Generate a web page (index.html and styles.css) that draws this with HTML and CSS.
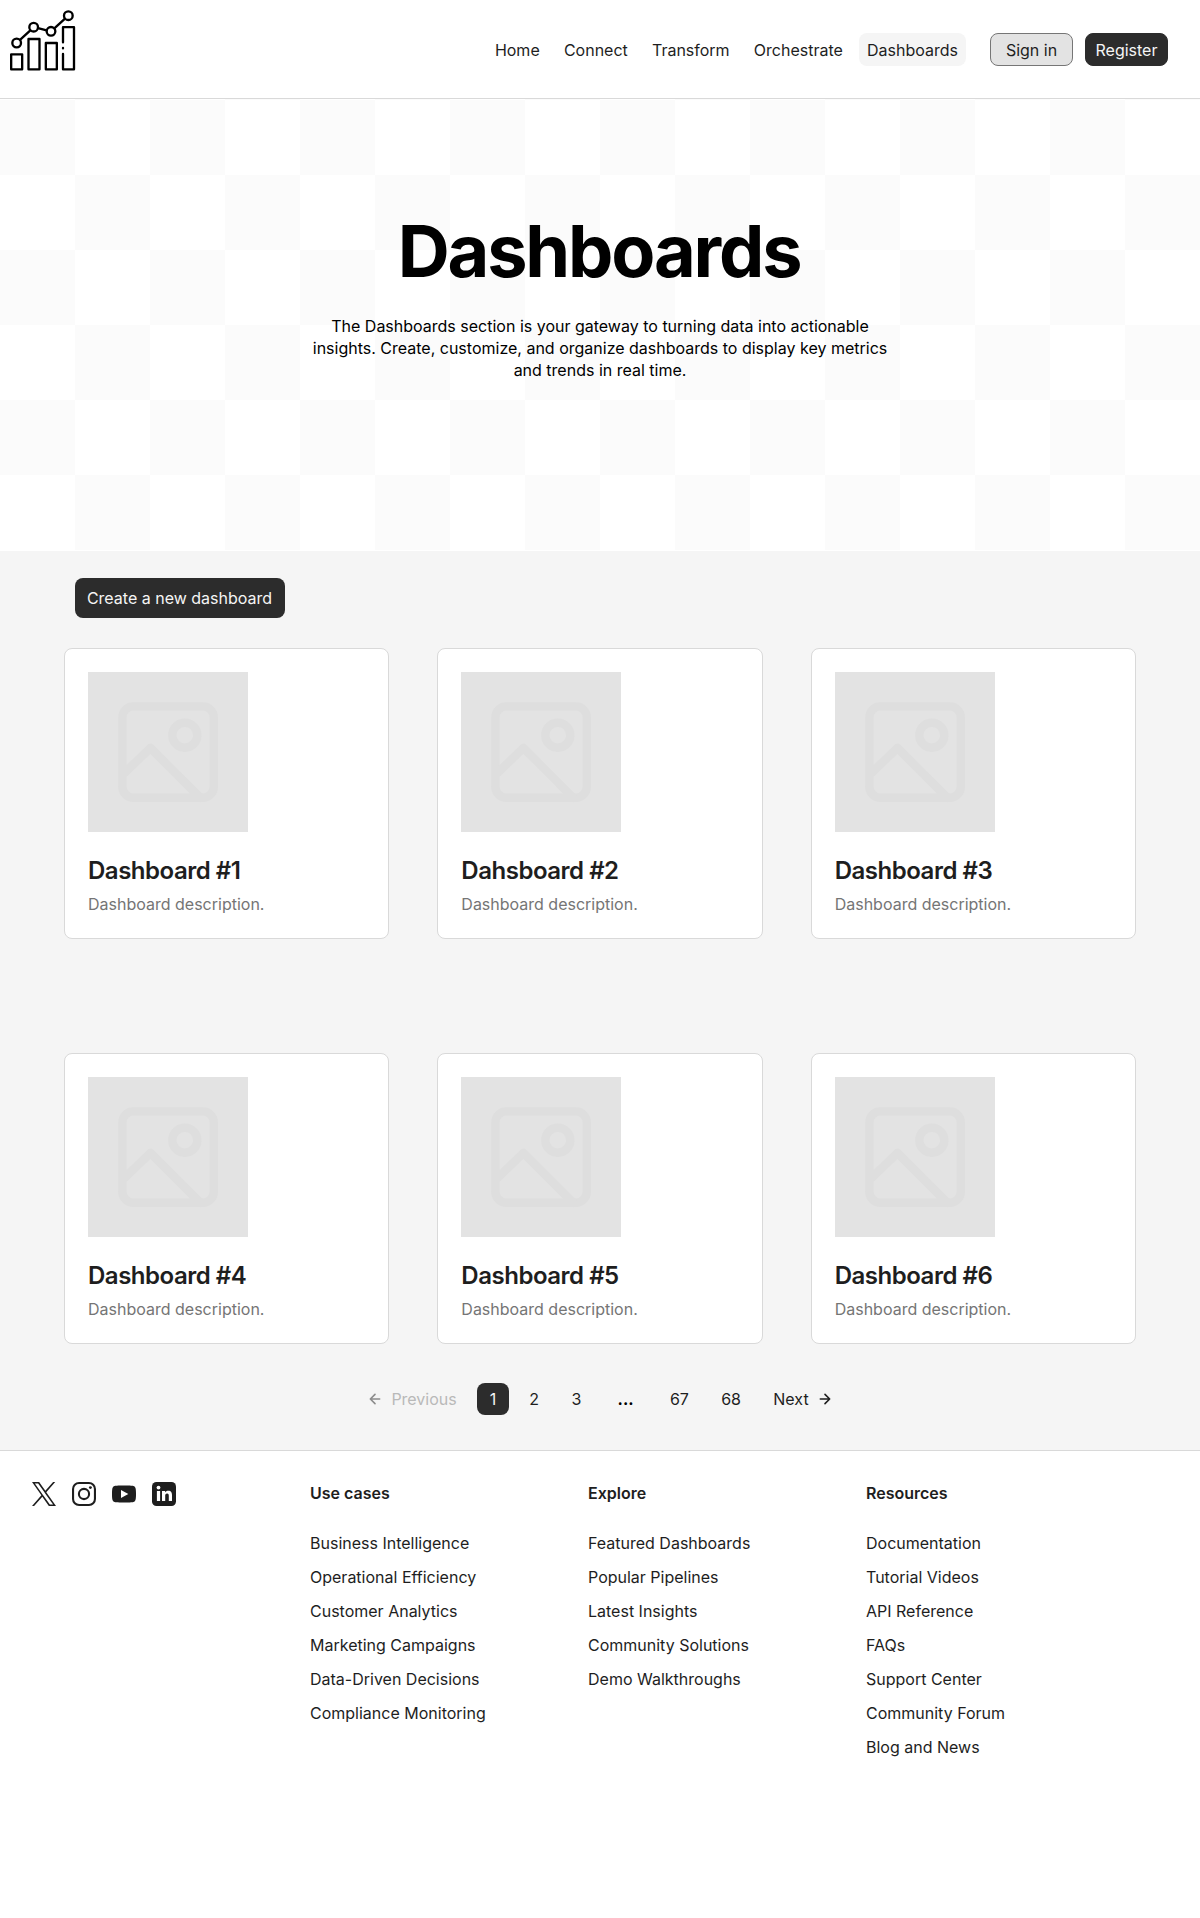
FILE: index.html
```html
<!DOCTYPE html>
<html lang="en">
<head>
<meta charset="utf-8">
<title>Dashboards</title>
<link rel="stylesheet" href="styles.css">
</head>
<body>
<svg class="sprite" width="0" height="0" aria-hidden="true">
  <symbol id="placeholder" viewBox="0 0 160 160">
    <g fill="none" stroke="#dedede" stroke-width="8.4" stroke-linecap="round" stroke-linejoin="round">
      <rect x="34.4" y="34.4" width="91.4" height="91.4" rx="11"/>
      <circle cx="96.8" cy="63.2" r="12.5"/>
      <path d="M36 101.500 62.400 76l50 50"/>
    </g>
  </symbol>
</svg>

<header class="header">
  <a class="logo" href="#" aria-label="Home">
    <svg viewBox="0 0 240 225" width="80" height="75" fill="none" stroke="#000" stroke-width="7" stroke-linejoin="round" stroke-linecap="round">
      <path d="M33.500 163h33v45h-33zM85.500 117h33v91h-33zM137.500 129h33v79h-33zM189 127V81.500h33V208h-33v-46M189 144v1"/>
      <circle cx="50" cy="129" r="13"/><circle cx="101" cy="81.500" r="13"/><circle cx="153" cy="94" r="13"/><circle cx="205" cy="47" r="13"/>
      <path d="M60 119.500 91 91M114 84.500l26 6.500M163 85l32-29"/>
    </svg>
  </a>
  <nav class="nav">
    <a href="#">Home</a>
    <a href="#">Connect</a>
    <a href="#">Transform</a>
    <a href="#">Orchestrate</a>
    <a href="#" class="active">Dashboards</a>
  </nav>
  <div class="auth">
    <button class="btn btn-neutral">Sign in</button>
    <button class="btn btn-dark">Register</button>
  </div>
</header>

<section class="hero">
  <h1>Dashboards</h1>
  <p>The Dashboards section is your gateway to turning data into actionable insights. Create, customize, and organize dashboards to display key metrics and trends in real time.</p>
</section>

<main class="main">
  <button class="create">Create a new dashboard</button>
  <div class="grid">
    <article class="card"><svg class="thumb"><use href="#placeholder"/></svg><h2>Dashboard #1</h2><p>Dashboard description.</p></article>
    <article class="card"><svg class="thumb"><use href="#placeholder"/></svg><h2>Dahsboard #2</h2><p>Dashboard description.</p></article>
    <article class="card"><svg class="thumb"><use href="#placeholder"/></svg><h2>Dashboard #3</h2><p>Dashboard description.</p></article>
    <article class="card"><svg class="thumb"><use href="#placeholder"/></svg><h2>Dashboard #4</h2><p>Dashboard description.</p></article>
    <article class="card"><svg class="thumb"><use href="#placeholder"/></svg><h2>Dashboard #5</h2><p>Dashboard description.</p></article>
    <article class="card"><svg class="thumb"><use href="#placeholder"/></svg><h2>Dashboard #6</h2><p>Dashboard description.</p></article>
  </div>
  <nav class="pages">
    <a class="page prev"><svg width="16" height="16" viewBox="0 0 16 16" fill="none" stroke="#8c8c8c" stroke-width="1.600" stroke-linecap="round" stroke-linejoin="round"><path d="M12.670 8H3.330M8 12.670 3.330 8 8 3.330"/></svg>Previous</a>
    <a class="page current">1</a>
    <a class="page">2</a>
    <a class="page">3</a>
    <span class="dots">...</span>
    <a class="page">67</a>
    <a class="page">68</a>
    <a class="page">Next<svg width="16" height="16" viewBox="0 0 16 16" fill="none" stroke="#1e1e1e" stroke-width="1.600" stroke-linecap="round" stroke-linejoin="round"><path d="M3.330 8h9.340M8 3.330 12.670 8 8 12.670"/></svg></a>
  </nav>
</main>

<footer class="footer">
  <div class="social">
    <svg width="24" height="24" viewBox="0 0 24 24" fill="#1e1e1e"><path d="M14.283 10.162 23.218 0H21.100l-7.757 8.824L7.147 0H0l9.370 13.343L0 24h2.117l8.193-9.318L16.853 24H24l-9.717-13.838ZM11.383 13.461l-.949-1.329L2.880 1.560h3.252l6.096 8.533.950 1.329 7.924 11.090H17.850l-6.467-9.051Z"/></svg>
    <svg width="24" height="24" viewBox="0 0 24 24" fill="none" stroke="#1e1e1e" stroke-width="2.100"><rect x="1.050" y="1.050" width="21.900" height="21.900" rx="6"/><circle cx="12" cy="12" r="5.100"/><circle cx="18.400" cy="5.600" r="1.440" fill="#1e1e1e" stroke="none"/></svg>
    <svg width="24" height="24" viewBox="0 0 24 24"><path fill="#1e1e1e" d="M23.760 7.200s-.230-1.660-.960-2.390c-.910-.950-1.930-.960-2.400-1.020C17.050 3.550 12 3.550 12 3.550s-5.050 0-8.400.240c-.470.060-1.490.060-2.400 1.020C.470 5.540.240 7.200.240 7.200S0 9.140 0 11.090v1.820c0 1.940.240 3.890.240 3.890s.230 1.660.960 2.390c.910.950 2.110.920 2.640 1.030 1.920.180 8.160.240 8.160.240s5.050-.010 8.400-.250c.470-.060 1.490-.060 2.400-1.020.730-.730.960-2.390.960-2.390s.240-1.940.240-3.890v-1.820c0-1.950-.240-3.890-.240-3.890Z"/><path fill="#fff" d="M9 7.900v8l7.300-4z"/></svg>
    <svg width="24" height="24" viewBox="0 0 24 24"><rect width="24" height="24" rx="4.500" fill="#1e1e1e"/><g fill="#fff"><circle cx="6.500" cy="5.600" r="1.900"/><rect x="4.900" y="9" width="3.200" height="10"/><path d="M10 9h3.100v1.400c.600-1 1.700-1.700 3.200-1.700 2.900 0 3.700 1.900 3.700 4.500V19h-3.200v-5.100c0-1.300-.200-2.500-1.700-2.500s-1.900 1.200-1.900 2.500V19H10z"/></g></svg>
  </div>
  <div class="col">
    <h3>Use cases</h3>
    <a>Business Intelligence</a><a>Operational Efficiency</a><a>Customer Analytics</a><a>Marketing Campaigns</a><a>Data-Driven Decisions</a><a>Compliance Monitoring</a>
  </div>
  <div class="col">
    <h3>Explore</h3>
    <a>Featured Dashboards</a><a>Popular Pipelines</a><a>Latest Insights</a><a>Community Solutions</a><a>Demo Walkthroughs</a>
  </div>
  <div class="col">
    <h3>Resources</h3>
    <a>Documentation</a><a>Tutorial Videos</a><a>API Reference</a><a>FAQs</a><a>Support Center</a><a>Community Forum</a><a>Blog and News</a>
  </div>
</footer>
</body>
</html>
```
FILE: styles.css
```css
* { box-sizing: border-box; }
body {
  margin: 0;
  min-height: 1918px;
  background: #fff;
  color: #1e1e1e;
  font: 400 16px/22px Inter, sans-serif;
}
h1, h2, h3, p { margin: 0; }
a { color: inherit; text-decoration: none; }
button { font: inherit; margin: 0; cursor: pointer; }
svg { display: block; flex: none; }
.sprite { position: absolute; }

.header {
  display: flex;
  align-items: center;
  height: 99px;
  padding-right: 32px;
  border-bottom: 1px solid #d9d9d9;
}
.logo { align-self: flex-start; margin-right: auto; }
.nav { display: flex; gap: 8.2px; margin-right: 24px; }
.nav a { height: 33px; padding: 1px 8px 0; line-height: 33px; border-radius: 8px; }
.nav .active { background: #f5f5f5; }
.auth { display: flex; gap: 12px; }
.btn {
  width: 83px;
  height: 33px;
  padding: 1px 0 0;
  border: 1px solid #2c2c2c;
  border-radius: 8px;
  line-height: 30px;
  text-align: center;
}
.btn-neutral { background: #e3e3e3; border-color: #767676; color: #1e1e1e; }
.btn-dark { background: #2c2c2c; color: #f5f5f5; }

.hero {
  height: 452px;
  padding-top: 109px;
  background: conic-gradient(#fff 25%, #fbfbfb 0 50%, #fff 0 75%, #fbfbfb 0) 0 1px / 150px 150px;
  border-bottom: 1px solid #fff;
  color: #000;
  text-align: center;
}
.hero h1 { padding-right: 2px; font-size: 72px; font-weight: 700; line-height: 86px; letter-spacing: -0.03em; }
.hero p { width: 600px; margin: 21px auto 0; }

.main { height: 899px; padding: 27px 64px 0; background: #f5f5f5; }
.create {
  display: block;
  height: 40px;
  width: 210px;
  margin-left: 11px;
  padding: 0 1px 0 0;
  border: 0;
  border-radius: 8px;
  background: #2c2c2c;
  color: #f5f5f5;
}
.grid {
  display: grid;
  grid-template-columns: repeat(3, 1fr);
  gap: 114px 48px;
  margin-top: 30px;
}
.card {
  height: 291px;
  padding: 23px;
  background: #fff;
  border: 1px solid #d9d9d9;
  border-radius: 8px;
}
.thumb { width: 160px; height: 160px; background: #e3e3e3; }
.card h2 { margin-top: 24px; font-size: 24px; font-weight: 600; line-height: 29px; letter-spacing: -0.02em; }
.card p { margin-top: 8px; color: #757575; }

.pages { display: flex; justify-content: center; gap: 8.3px; margin-top: 39px; }
.page {
  display: flex;
  align-items: center;
  justify-content: center;
  gap: 8px;
  height: 32px;
  padding: 0 12px;
  border-radius: 8px;
}
.prev { color: #b9b9b9; }
.current { width: 32px; background: #2c2c2c; color: #f5f5f5; }
.dots { padding: 0 16px; color: #000; font-weight: 700; line-height: 32px; }

.footer {
  display: grid;
  grid-template-columns: repeat(4, 262px);
  gap: 16px;
  padding: 31px 32px;
  border-top: 1px solid #d9d9d9;
}
.social { display: flex; gap: 16px; }
.col { display: flex; flex-direction: column; gap: 12px; }
.col h3 { margin-bottom: 16px; font-size: 16px; font-weight: 600; line-height: 22px; }
```
